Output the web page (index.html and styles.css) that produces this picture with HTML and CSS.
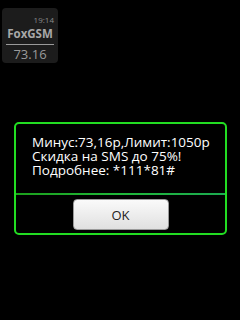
FILE: index.html
```html
<!DOCTYPE html>
<html>
<head>
<meta charset="utf-8">
<link rel="stylesheet" href="styles.css">
</head>
<body>
<div class="widget">
  <div class="time">19:14</div>
  <div class="name">FoxGSM</div>
  <div class="rule"></div>
  <div class="balance">73.16</div>
</div>
<div class="dialog">
  <div class="message">
    <div class="line">Минус:73,16р,Лимит:1050р</div>
    <div class="line">Скидка на SMS до 75%!</div>
    <div class="line">Подробнее: *111*81#</div>
  </div>
  <div class="divider"></div>
  <div class="actions">
    <button class="ok">OK</button>
  </div>
</div>
</body>
</html>
```
FILE: styles.css
```css
html, body {
  margin: 0;
  padding: 0;
  background: #000;
  width: 240px;
  height: 320px;
  overflow: hidden;
  font-family: "Open Sans", "DejaVu Sans", sans-serif;
}
.widget {
  margin: 8px 0 0 2px;
  width: 56px;
  height: 55px;
  box-sizing: border-box;
  background: #1c1c1c;
  border-radius: 4px;
  padding: 7px 4px 0 4px;
  display: flex;
  flex-direction: column;
  align-items: center;
}
.time {
  align-self: flex-end;
  font-size: 8px;
  line-height: 9px;
  color: #8a8a8a;
}
.name {
  font-size: 11.5px;
  font-weight: bold;
  line-height: 14px;
  color: #a8a8a8;
  margin-top: 3px;
}
.rule {
  width: 48px;
  height: 1px;
  background: #9a9a9a;
  margin-top: 3px;
}
.balance {
  font-size: 13px;
  line-height: 14px;
  color: #9a9a9a;
  margin-top: 2px;
}
.dialog {
  margin: 59px 0 0 14px;
  width: 213px;
  height: 113px;
  box-sizing: border-box;
  border: 2px solid #22dd22;
  border-radius: 5px;
  display: flex;
  flex-direction: column;
}
.message {
  padding: 11px 0 0 16px;
  height: 58px;
  color: #fff;
  font-size: 13.5px;
}
.line {
  height: 14px;
  line-height: 14px;
  white-space: nowrap;
}
.divider {
  height: 2px;
  background: linear-gradient(90deg, #1ca01c, #20b83a 50%, #1caa50);
}
.actions {
  display: flex;
  justify-content: center;
  padding-top: 4px;
}
.ok {
  width: 96px;
  height: 31px;
  border: 1px solid #9a9a9a;
  border-radius: 4px;
  background: linear-gradient(#fafafa, #e0e0e0);
  font-family: "Open Sans", "DejaVu Sans", sans-serif;
  font-size: 13px;
  color: #222;
  padding: 0;
}
```
